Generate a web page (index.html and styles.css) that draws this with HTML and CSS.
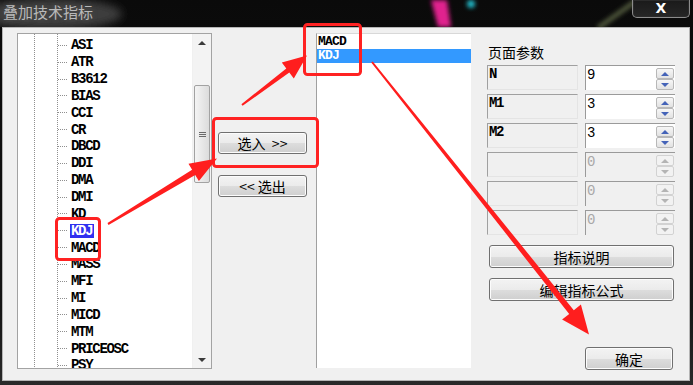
FILE: index.html
```html
<!DOCTYPE html>
<html lang="zh">
<head>
<meta charset="utf-8">
<title>叠加技术指标</title>
<link rel="stylesheet" href="styles.css">
</head>
<body>
<div class="window">
  <div class="titlebar">
    <svg class="sky" viewBox="0 0 693 27" width="693" height="27">
      <defs>
        <filter id="b4" x="-50%" y="-50%" width="200%" height="200%"><feGaussianBlur stdDeviation="4"/></filter>
        <filter id="b2" x="-50%" y="-50%" width="200%" height="200%"><feGaussianBlur stdDeviation="2"/></filter>
      </defs>
      <ellipse cx="50" cy="14" rx="72" ry="16" fill="#3c3c3c" filter="url(#b4)"/>
      <polygon points="431,0 447,0 451,27 438,27" fill="#e0208e" filter="url(#b2)"/>
      <circle cx="471" cy="4" r="4" fill="#20b8c8" filter="url(#b2)"/>
      <line x1="598" y1="28" x2="640" y2="-2" stroke="#4e553a" stroke-width="5" filter="url(#b2)"/>
    </svg>
    <span class="title">叠加技术指标</span>
    <div class="close">X</div>
  </div>
  <div class="client">
    <div class="tree">
      <div class="tree-body">
        <div class="row"><span class="conn"></span><span class="label">ASI</span></div>
        <div class="row"><span class="conn"></span><span class="label">ATR</span></div>
        <div class="row"><span class="conn"></span><span class="label">B3612</span></div>
        <div class="row"><span class="conn"></span><span class="label">BIAS</span></div>
        <div class="row"><span class="conn"></span><span class="label">CCI</span></div>
        <div class="row"><span class="conn"></span><span class="label">CR</span></div>
        <div class="row"><span class="conn"></span><span class="label">DBCD</span></div>
        <div class="row"><span class="conn"></span><span class="label">DDI</span></div>
        <div class="row"><span class="conn"></span><span class="label">DMA</span></div>
        <div class="row"><span class="conn"></span><span class="label">DMI</span></div>
        <div class="row"><span class="conn"></span><span class="label">KD</span></div>
        <div class="row"><span class="conn"></span><span class="label sel">KDJ</span></div>
        <div class="row"><span class="conn"></span><span class="label">MACD</span></div>
        <div class="row"><span class="conn"></span><span class="label">MASS</span></div>
        <div class="row"><span class="conn"></span><span class="label">MFI</span></div>
        <div class="row"><span class="conn"></span><span class="label">MI</span></div>
        <div class="row"><span class="conn"></span><span class="label">MICD</span></div>
        <div class="row"><span class="conn"></span><span class="label">MTM</span></div>
        <div class="row"><span class="conn"></span><span class="label">PRICEOSC</span></div>
        <div class="row"><span class="conn"></span><span class="label">PSY</span></div>
      </div>
      <div class="vscroll">
        <div class="sarrow"><span class="tri-up"></span></div>
        <div class="track-top"></div>
        <div class="thumb"><span class="grip"></span></div>
        <div class="track-rest"></div>
        <div class="sarrow"><span class="tri-down"></span></div>
      </div>
    </div>
    <div class="mid">
      <button class="btn move">选入&nbsp;&nbsp;&gt;&gt;</button>
      <button class="btn move out">&lt;&lt;&nbsp;选出</button>
    </div>
    <div class="sel-list">
      <div class="sel-item">MACD</div>
      <div class="sel-item active">KDJ</div>
    </div>
    <div class="params">
      <div class="params-title">页面参数</div>
      <div class="prow">
        <div class="pname">N</div>
        <div class="pval">9</div>
        <div class="spin"><span class="sb"><span class="tri-up"></span></span><span class="sb"><span class="tri-down"></span></span></div>
      </div>
      <div class="prow">
        <div class="pname">M1</div>
        <div class="pval">3</div>
        <div class="spin"><span class="sb"><span class="tri-up"></span></span><span class="sb"><span class="tri-down"></span></span></div>
      </div>
      <div class="prow">
        <div class="pname">M2</div>
        <div class="pval">3</div>
        <div class="spin"><span class="sb"><span class="tri-up"></span></span><span class="sb"><span class="tri-down"></span></span></div>
      </div>
      <div class="prow off">
        <div class="pname"></div>
        <div class="pval">0</div>
        <div class="spin"><span class="sb"><span class="tri-up"></span></span><span class="sb"><span class="tri-down"></span></span></div>
      </div>
      <div class="prow off">
        <div class="pname"></div>
        <div class="pval">0</div>
        <div class="spin"><span class="sb"><span class="tri-up"></span></span><span class="sb"><span class="tri-down"></span></span></div>
      </div>
      <div class="prow off">
        <div class="pname"></div>
        <div class="pval">0</div>
        <div class="spin"><span class="sb"><span class="tri-up"></span></span><span class="sb"><span class="tri-down"></span></span></div>
      </div>
      <button class="btn wide first">指标说明</button>
      <button class="btn wide">编辑指标公式</button>
      <button class="btn ok">确定</button>
    </div>
  </div>
  <svg class="annot" viewBox="0 0 693 385" width="693" height="385">
    <g fill="none" stroke="#ff2222" stroke-width="3">
      <rect x="56.5" y="218.5" width="43" height="41" rx="3"/>
      <rect x="213.5" y="118.5" width="104" height="48" rx="3"/>
      <rect x="304.5" y="24.5" width="56" height="50" rx="3"/>
    </g>
    <g fill="#ff1e1e">
      <polygon points="107.5,223.1 192.1,169.8 188.5,163.8 217,158.5 198.9,181 195.2,175 108.5,224.9"/>
      <polygon points="241.4,104.2 286.3,68.4 281.8,62.4 307,55.5 293.8,78.4 289.3,72.4 242.6,105.8"/>
      <polygon points="371.2,62.6 569.2,314 562.1,319.6 589,334.5 580.9,304.6 573.8,310.2 372.8,61.4"/>
    </g>
  </svg>
</div>
</body>
</html>
```
FILE: styles.css
```css
* { box-sizing: border-box; }
html, body { margin: 0; padding: 0; }
body {
  width: 693px;
  height: 385px;
  overflow: hidden;
  background: #111;
  font-family: "Liberation Mono", monospace;
}
.window {
  position: relative;
  width: 693px;
  height: 385px;
  padding: 0 3px 0 2px;
  background: linear-gradient(#0a0a0a, #151515 80%, #2a2a2a);
  display: flex;
  flex-direction: column;
}
.titlebar {
  position: relative;
  height: 27px;
  flex-shrink: 0;
  display: flex;
  justify-content: space-between;
  align-items: flex-start;
}
.sky {
  position: absolute;
  left: -2px;
  top: 0;
}
.title {
  position: relative;
  margin: 3px 0 0 1px;
  font: 15px/18px "Noto Sans CJK SC", sans-serif;
  color: #b9b9b9;
  text-shadow: 0 0 5px rgba(90, 90, 90, 0.9);
}
.close {
  position: relative;
  width: 58px;
  height: 18px;
  border: 1px solid #8c8c8c;
  border-top: none;
  border-radius: 0 0 5px 5px;
  box-shadow: inset 0 0 0 1px #2b2b2b;
  background: linear-gradient(#1a1a1a, #262626);
  display: flex;
  justify-content: center;
  align-items: center;
  color: #fff;
  font: bold 14px/1 "DejaVu Sans", sans-serif;
  padding-bottom: 1px;
}
.client {
  height: 354px;
  border: 1px solid #b5b5b5;
  background: #f0f0f0;
  display: flex;
  align-items: flex-start;
  padding: 5px 0 0 14px;
}

/* tree */
.tree {
  width: 195px;
  height: 336px;
  border: 1px solid #a3a3a3;
  background: #fff;
  display: flex;
  flex-shrink: 0;
}
.tree-body {
  flex: 1;
  padding-top: 3px;
  overflow: hidden;
  background-image: linear-gradient(#8f8f8f 50%, transparent 50%), linear-gradient(#8f8f8f 50%, transparent 50%);
  background-size: 1px 2px, 1px 2px;
  background-position: 16px 0, 39px 0;
  background-repeat: repeat-y;
}
.row {
  height: 16.85px;
  display: flex;
  align-items: center;
  padding-left: 40px;
}
.conn {
  width: 10px;
  height: 1px;
  margin-right: 2px;
  background-image: linear-gradient(to right, #8f8f8f 50%, transparent 50%);
  background-size: 2px 1px;
}
.label {
  font-weight: bold;
  font-size: 14px;
  letter-spacing: -1.3px;
  line-height: 14px;
  padding: 0 2px 0 1px;
  color: #000;
}
.label.sel {
  background: #3030f0;
  color: #fff;
}
.vscroll {
  width: 19px;
  display: flex;
  flex-direction: column;
  background: #f3f3f3;
  border-left: 1px solid #f0f0f0;
}
.sarrow {
  height: 17px;
  display: flex;
  justify-content: center;
  align-items: center;
}
.track-top { height: 34px; }
.thumb {
  height: 98px;
  margin: 0 1px;
  border: 1px solid #a2a2a2;
  border-radius: 2px;
  background: linear-gradient(to right, #f4f4f4, #dcdcdc);
  display: flex;
  justify-content: center;
  align-items: center;
}
.grip {
  width: 7px;
  height: 5px;
  border-top: 1px solid #6a6a6a;
  border-bottom: 1px solid #6a6a6a;
  background: linear-gradient(transparent 1px, #6a6a6a 1px, #6a6a6a 2px, transparent 2px);
}
.track-rest { flex: 1; }
.tri-up, .tri-down {
  width: 0;
  height: 0;
  border-left: 4px solid transparent;
  border-right: 4px solid transparent;
}
.tri-up { border-bottom: 4px solid #3a3a3a; }
.tri-down { border-top: 4px solid #3a3a3a; }

/* middle buttons */
.btn {
  display: flex;
  justify-content: center;
  align-items: center;
  border: 1px solid #707070;
  border-radius: 3px;
  background: linear-gradient(#f3f3f3 0%, #ebebeb 50%, #dddddd 51%, #cfcfcf 100%);
  box-shadow: inset 0 0 0 1px #fcfcfc;
  font: 14px/1 "Noto Sans CJK SC", sans-serif;
  color: #000;
  padding: 0;
}
.mid {
  width: 104px;
  flex-shrink: 0;
  display: flex;
  flex-direction: column;
  padding: 99px 0 0 6px;
}
.move {
  width: 89px;
  height: 22px;
}
.move.out { margin-top: 21px; }

/* selected list */
.sel-list {
  width: 155px;
  height: 335px;
  flex-shrink: 0;
  background: #fff;
  border-left: 1px solid #a0a0a0;
  border-top: 1px solid #d8d8d8;
  padding-top: 1px;
}
.sel-item {
  height: 14px;
  line-height: 14px;
  padding-left: 1px;
  font-weight: bold;
  font-size: 13px;
  letter-spacing: -0.8px;
  color: #000;
  overflow: hidden;
}
.sel-item.active {
  background: #3399ff;
  color: #fff;
}

/* params */
.params {
  width: 189px;
  margin-left: 16px;
  flex-shrink: 0;
  display: flex;
  flex-direction: column;
}
.params-title {
  margin: 11px 0 0 1px;
  font: 14px/17px "Noto Sans CJK SC", sans-serif;
  color: #000;
  height: 21px;
}
.prow {
  display: flex;
  height: 25px;
  margin-bottom: 4px;
}
.pname {
  width: 91px;
  height: 25px;
  border: 1px solid;
  border-color: #a0a0a0 #e4e4e4 #e4e4e4 #a0a0a0;
  padding: 1px 0 0 1px;
  font-weight: bold;
  font-size: 14px;
  letter-spacing: -1.3px;
  line-height: 14px;
}
.pval {
  width: 70px;
  height: 25px;
  margin-left: 7px;
  border-left: 1px solid #9a9a9a;
  border-top: 1px solid #9a9a9a;
  background: #fff;
  padding: 2px 0 0 1px;
  font-size: 14px;
  line-height: 14px;
}
.spin {
  width: 20px;
  display: flex;
  flex-direction: column;
  padding: 2px 1px 0 1px;
  background: #fff;
  border-top: 1px solid #9a9a9a;
}
.sb {
  height: 11px;
  border: 1px solid #b8b8b8;
  border-radius: 2px;
  background: linear-gradient(#f7f7f7, #e2e2e2);
  display: flex;
  justify-content: center;
  align-items: center;
}
.spin .tri-up { border-bottom-color: #4463b8; border-width: 0 4px 4px 4px; }
.spin .tri-down { border-top-color: #4463b8; border-width: 4px 4px 0 4px; }
.off .pval { background: #f0f0f0; color: #a8a8a8; }
.off .spin { background: #f0f0f0; }
.off .sb { border-color: #d2d2d2; background: #f2f2f2; }
.off .spin .tri-up { border-bottom-color: #b4b4b4; }
.off .spin .tri-down { border-top-color: #b4b4b4; }
.wide {
  width: 185px;
  height: 23px;
  margin-left: 2px;
  margin-top: 10px;
}
.wide.first { margin-top: 6px; }
.ok {
  width: 88px;
  height: 23px;
  margin: 46px 0 0 98px;
}
.annot {
  position: absolute;
  left: 0;
  top: 0;
  pointer-events: none;
}
```
